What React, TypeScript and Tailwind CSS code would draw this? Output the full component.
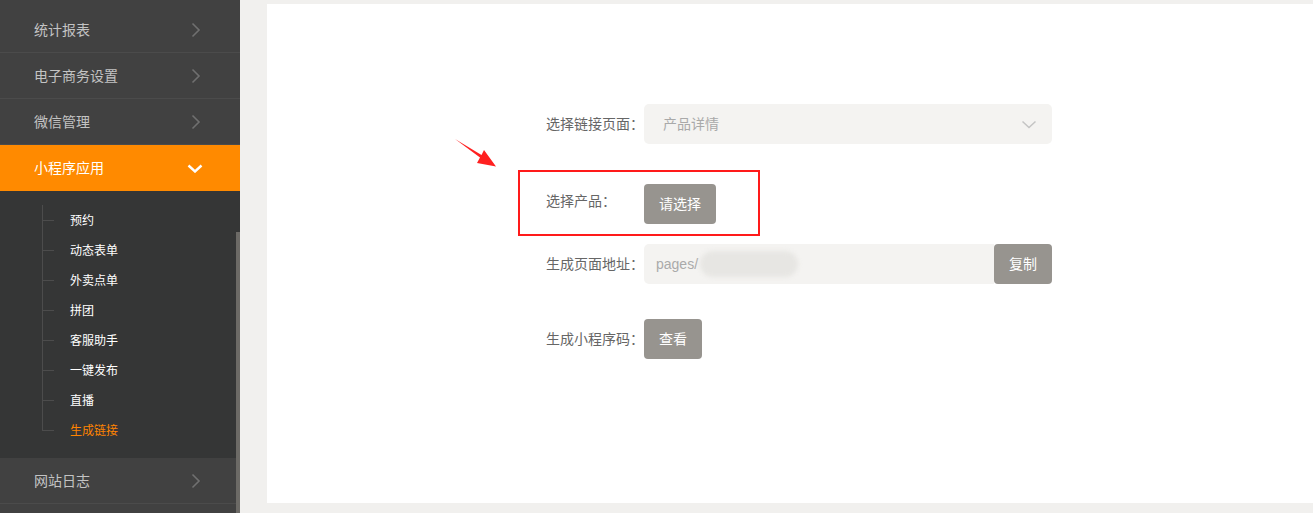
import { ReactNode } from 'react'

const FONT = { fontFamily: '"Liberation Sans", "Noto Sans CJK SC", sans-serif' }

const TOP_MENU = ['统计报表', '电子商务设置', '微信管理']
const SUB_MENU = ['预约', '动态表单', '外卖点单', '拼团', '客服助手', '一键发布', '直播', '生成链接']

function ChevronRight() {
  return (
    <svg width="10" height="16" viewBox="0 0 10 16" fill="none">
      <polyline points="1.5,1.5 8,8 1.5,14.5" stroke="#707070" strokeWidth="1.6" />
    </svg>
  )
}

function ChevronDown({ color, width = 2.4 }: { color: string; width?: number }) {
  return (
    <svg width="16" height="9" viewBox="0 0 16 9" fill="none">
      <polyline points="1.5,1.5 8,7.5 14.5,1.5" stroke={color} strokeWidth={width} />
    </svg>
  )
}

function MenuRow({ label }: { label: string }) {
  return (
    <div className="flex h-[46px] items-center justify-between border-b border-[#4b4b4b] pl-[34px] pr-[39px] text-[14px] text-[#c3c3c3]">
      <span className="pt-[2px]">{label}</span>
      <ChevronRight />
    </div>
  )
}

function FormRow({ label, children }: { label: string; children: ReactNode }) {
  return (
    <div className="flex items-center">
      <div className="w-[98px] text-[14px] text-[#666]">{label}</div>
      {children}
    </div>
  )
}

function GreyButton({ children, className = '' }: { children: ReactNode; className?: string }) {
  return (
    <button className={`h-[40px] rounded-[4px] bg-[#97948f] text-[14px] text-white ${className}`}>{children}</button>
  )
}

export default function App() {
  return (
    <div className="flex h-[513px] w-[1313px] overflow-hidden bg-[#f1f0ee]" style={FONT}>
      <aside className="relative h-full w-[240px] shrink-0 bg-[#414141] pt-[7px]">
        {TOP_MENU.map(item => (
          <MenuRow key={item} label={item} />
        ))}
        <div className="flex h-[46px] items-center justify-between bg-[#ff8a00] pl-[34px] pr-[37px] text-[14px] text-white">
          <span className="pt-[1px]">小程序应用</span>
          <ChevronDown color="#ffffff" />
        </div>
        <div className="bg-[#353636] pb-[13px] pt-[14px]">
          <div className="relative ml-[42px] border-l border-[#4c4c4c]" style={{ height: 226 }}>
            <div className="absolute left-0 top-0 flex flex-col">
              {SUB_MENU.map(item => (
                <div key={item} className="flex h-[30px] items-center">
                  <span className="h-px w-[11px] bg-[#4c4c4c]" />
                  <span
                    className={`ml-[16px] pt-[2px] text-[12px] ${item === '生成链接' ? 'text-[#ff8400]' : 'text-white'}`}
                  >
                    {item}
                  </span>
                </div>
              ))}
            </div>
          </div>
          <div className="h-[14px]" />
        </div>
        <MenuRow label="网站日志" />
        <div className="absolute right-0 top-[232px] h-[281px] w-[4px] bg-[#6c6a66]" />
      </aside>

      <main className="flex-1 pl-[27px] pt-[4px]">
        <div className="relative h-[499px] w-full bg-white pl-[279px] pt-[100px]">
          <svg className="absolute left-[188px] top-[132px]" width="46" height="34" viewBox="0 0 46 34">
            <polygon points="0,3 26.5,19 29,14 41,30.5 22,27 25,21.5" fill="#ff2020" />
          </svg>

          <div className="flex flex-col">
            <FormRow label="选择链接页面：">
              <div className="flex h-[40px] w-[408px] items-center justify-between rounded-[5px] bg-[#f4f3f1] pl-[19px] pr-[15px] text-[14px] text-[#a9a9a9]">
                <span className="pt-[1px]">产品详情</span>
                <ChevronDown color="#c4c4c4" width={1.5} />
              </div>
            </FormRow>

            <div className="ml-[-28px] mt-[26px] flex h-[66px] w-[242px] items-center border-2 border-[#ff1a1a] pl-[26px]">
              <div className="w-[98px] pb-[3px] text-[14px] text-[#666]">选择产品：</div>
              <GreyButton className="mt-[2px] w-[72px]">请选择</GreyButton>
            </div>

            <div className="mt-[8px]">
              <FormRow label="生成页面地址：">
                <div className="flex h-[40px] w-[350px] items-center rounded-l-[5px] bg-[#f4f3f1] pl-[12px] text-[14px] text-[#aaa]">
                  <span>pages/</span>
                  <span className="ml-[2px] inline-block h-[26px] w-[98px] rounded-full bg-[#e7e6e3] blur-[2px]" />
                </div>
                <GreyButton className="w-[58px]">复制</GreyButton>
              </FormRow>
            </div>

            <div className="mt-[35px]">
              <FormRow label="生成小程序码：">
                <GreyButton className="w-[58px]">查看</GreyButton>
              </FormRow>
            </div>
          </div>
        </div>
      </main>
    </div>
  )
}
